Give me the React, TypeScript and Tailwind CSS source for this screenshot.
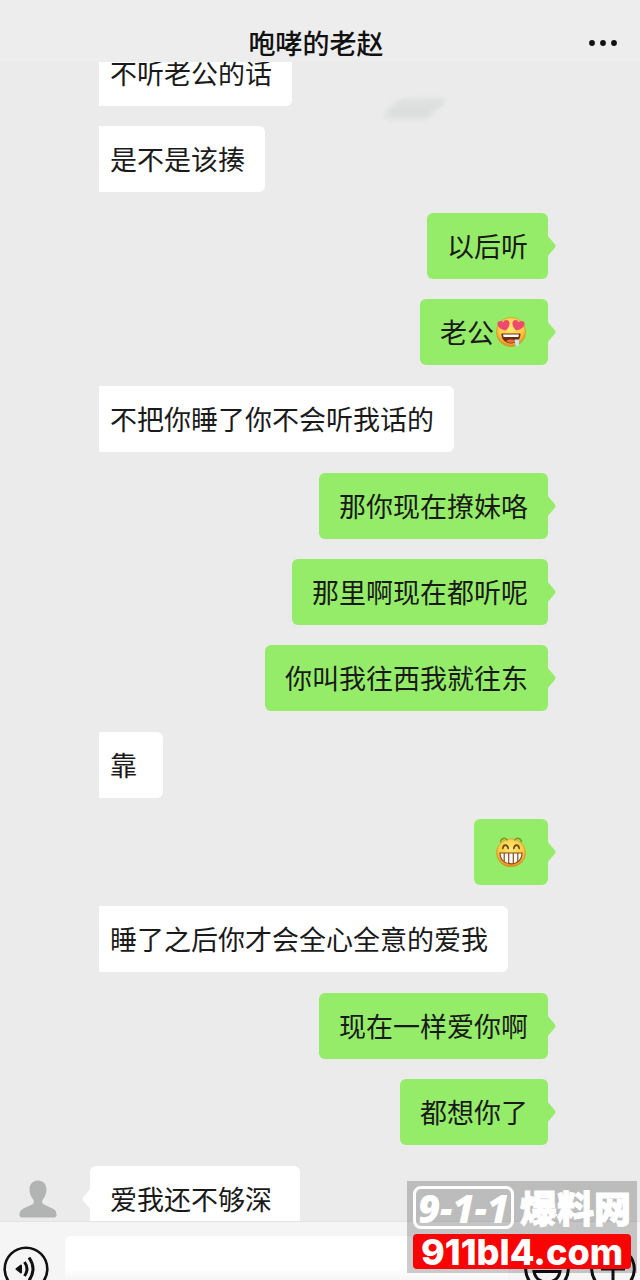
import { type ReactNode } from "react";

type Message = {
  text?: string;
  emoji?: ReactNode;
};

type MessageGroup = {
  from: "me" | "them";
  avatar?: boolean;
  messages: Message[];
};

function cx(...values: Array<string | false | null | undefined>) {
  return values.filter(Boolean).join(" ");
}

function FaceGradient({ id }: { id: string }) {
  return (
    <radialGradient id={id} cx="50%" cy="35%" r="65%">
      <stop offset="0" stopColor="#ffe873" />
      <stop offset="0.65" stopColor="#fcc944" />
      <stop offset="1" stopColor="#e08a22" />
    </radialGradient>
  );
}

function DroolEmoji() {
  return (
    <svg viewBox="0 0 30 30" className="mx-0.5 size-[30px]" role="img" aria-label="色">
      <defs>
        <FaceGradient id="drool-face" />
      </defs>
      <circle cx="15" cy="15" r="14.6" fill="url(#drool-face)" stroke="#d98a1e" strokeWidth="0.6" />
      <path
        d="M9.5 13.6C5 12.4 1.2 10 1.4 6.6C1.6 3.6 5.2 3 7.2 5.2C8.4 2.4 12.400 2.200 13.400 5.200C14.200 8 12 11.600 9.500 13.600Z"
        fill="#ee4a6e"
      />
      <path
        d="M20.5 13.6C25 12.4 28.8 10 28.6 6.6C28.4 3.6 24.8 3 22.8 5.2C21.6 2.4 17.600 2.200 16.600 5.200C15.800 8 18 11.600 20.500 13.600Z"
        fill="#ee4a6e"
      />
      <path d="M5.500 16.500H24.500C24.800 22.500 20.500 26.500 15 26.500C9.500 26.500 5.200 22.500 5.500 16.500Z" fill="#6b2d12" />
      <path d="M7 17.500H23L22.400 20H7.600Z" fill="#fff" />
      <path d="M10 24.200C12 22 17.500 22 20 24.200C17.500 26.300 13 26.300 10 24.200Z" fill="#ef6a3c" />
      <path d="M18.500 22.500H23V27C23 30 19.200 30 19.200 27Z" fill="#bfe6f5" />
    </svg>
  );
}

function GrinEmoji() {
  return (
    <svg viewBox="0 0 30 30" className="mx-0.5 size-[30px]" role="img" aria-label="呲牙">
      <defs>
        <FaceGradient id="grin-face" />
      </defs>
      <ellipse cx="15" cy="15.800" rx="14.500" ry="14" fill="url(#grin-face)" stroke="#d98a1e" strokeWidth="0.6" />
      <g fill="none" stroke="#87951f" strokeWidth="1.600" strokeLinecap="round">
        <path d="M4.500 4.500C5.500 0.800 9.500 0.400 11 3" />
        <path d="M19 3C20.500 0.400 24.500 0.800 25.500 4.500" />
      </g>
      <g fill="none" stroke="#6b4a12" strokeWidth="1.600" strokeLinecap="round">
        <path d="M6.800 11.500C7.300 7 11.500 7 12.300 11.500" />
        <path d="M17.700 11.500C18.500 7 22.700 7 23.200 11.500" />
      </g>
      <path
        d="M4 16H26C26 22.500 21.500 26.800 15 26.800C8.500 26.800 4 22.500 4 16Z"
        fill="#fff"
        stroke="#8a4b14"
        strokeWidth="1.200"
      />
      <path d="M8.200 16V24.500M12.700 16V26.500M17.300 16V26.500M21.800 16V24.500" stroke="#8a4b14" strokeWidth="1.200" />
    </svg>
  );
}

const groups: MessageGroup[] = [
  { from: "them", messages: [{ text: "不听老公的话" }, { text: "是不是该揍" }] },
  { from: "me", messages: [{ text: "以后听" }, { text: "老公", emoji: <DroolEmoji /> }] },
  { from: "them", messages: [{ text: "不把你睡了你不会听我话的" }] },
  {
    from: "me",
    messages: [{ text: "那你现在撩妹咯" }, { text: "那里啊现在都听呢" }, { text: "你叫我往西我就往东" }],
  },
  { from: "them", messages: [{ text: "靠" }] },
  { from: "me", messages: [{ emoji: <GrinEmoji /> }] },
  { from: "them", messages: [{ text: "睡了之后你才会全心全意的爱我" }] },
  { from: "me", messages: [{ text: "现在一样爱你啊" }, { text: "都想你了" }] },
  { from: "them", avatar: true, messages: [{ text: "爱我还不够深" }] },
];

function Tail({ side }: { side: "left" | "right" }) {
  return (
    <svg
      viewBox="0 0 9 22"
      aria-hidden="true"
      className={cx(
        "absolute top-[22px] h-[22px] w-[9px]",
        side === "right" ? "-right-2 text-[#95ec69]" : "-left-2 rotate-180 text-white",
      )}
    >
      <path d="M0 0L8 9.500Q9 11 8 12.500L0 22Z" fill="currentColor" />
    </svg>
  );
}

function Bubble({ message, from, tail }: { message: Message; from: "me" | "them"; tail: boolean }) {
  return (
    <div
      className={cx(
        "relative flex h-[66px] min-w-16 items-center text-[27px] leading-8 text-[#1a1a1a]",
        from === "me" && "rounded-md bg-[#95ec69] px-5",
        from === "them" && "bg-white",
        from === "them" && (tail ? "rounded-md pr-7 pl-5" : "rounded-r-md pr-5 pl-[11px]"),
      )}
    >
      {message.text ? <span>{message.text}</span> : null}
      {message.emoji}
      {tail ? <Tail side={from === "me" ? "right" : "left"} /> : null}
    </div>
  );
}

function Avatar() {
  return (
    <svg viewBox="0 0 38 38" className="mr-[33px] ml-[19px] size-[38px]" role="img" aria-label="头像">
      <path
        d="M19 0.500C24 0.500 27.500 4 27.500 9.500C27.500 14 25.500 17.500 23.500 20C22.800 22 23.200 23.500 25 24.500L34.500 29C37 30.500 37.500 32.500 37.500 35C37.500 36.500 36.800 37.500 35 37.500H3C1.200 37.500 0.500 36.500 0.500 35C0.500 32.500 1 30.500 3.500 29L13 24.500C14.800 23.500 15.200 22 14.500 20C12.500 17.500 10.500 14 10.500 9.500C10.500 4 14 0.500 19 0.500Z"
        fill="#b2b4b3"
      />
    </svg>
  );
}

function Group({ group }: { group: MessageGroup }) {
  return (
    <li
      className={cx(
        "flex flex-col gap-5",
        group.from === "me" && "items-end pr-[92px]",
        group.from === "them" && !group.avatar && "items-start pl-[99px]",
      )}
    >
      {group.messages.map((message, index) => (
        <div key={index} className="flex items-center">
          {group.avatar ? <Avatar /> : null}
          <Bubble message={message} from={group.from} tail={group.from === "me" || Boolean(group.avatar)} />
        </div>
      ))}
    </li>
  );
}

function Watermark() {
  return (
    <div className="pointer-events-none absolute right-[3px] bottom-[7px] w-[230px] bg-black/20 px-1.5 pt-[5px] pb-1 text-white">
      <div className="flex h-12 items-start justify-between">
        <span className="flex h-[43px] w-[101px] items-center justify-center rounded-lg border-3 border-white font-['Open_Sans'] text-[38px] leading-9 font-extrabold italic">
          9-1-1
        </span>
        <span className="text-[37px] leading-[43px] font-black [-webkit-text-stroke:1px_white]">爆料网</span>
      </div>
      <div className="flex h-[35px] items-center justify-center rounded-sm bg-[#f80404] font-[Inter] text-4xl font-extrabold">
        911bl4.com
      </div>
    </div>
  );
}

export default function App() {
  return (
    <div className="relative flex h-screen flex-col overflow-hidden bg-[#ebebeb] font-['Noto_Sans_CJK_SC',sans-serif]">
      <header className="grid h-[62px] shrink-0 grid-cols-[1fr_auto_1fr] items-end bg-[#ededed] pr-[21px] pb-[3px] pl-[13px]">
        <h1 className="col-start-2 text-[27px] leading-8 font-medium text-[#111]">咆哮的老赵</h1>
        <button type="button" aria-label="更多" className="flex h-8 items-center justify-self-end">
          <svg viewBox="0 0 30 8" className="h-2 w-[30px]" fill="#111">
            <circle cx="3" cy="4" r="2.900" />
            <circle cx="14" cy="4" r="2.900" />
            <circle cx="25" cy="4" r="2.900" />
          </svg>
        </button>
      </header>

      <main className="relative min-h-0 flex-1 overflow-hidden bg-[#eaebea]">
        <ul className="-mt-[22px] flex flex-col gap-[21px]">
          {groups.map((group, index) => (
            <Group key={index} group={group} />
          ))}
        </ul>
        <div
          aria-hidden="true"
          className="absolute top-9 right-[196px] h-3 w-12 -skew-x-[30deg] rounded-lg bg-[#dfe1e0] blur-[2px]"
        />
        <div
          aria-hidden="true"
          className="absolute top-[43px] right-[206px] h-3.5 w-12 -skew-x-[20deg] rounded-lg bg-[#dcdedd] blur-[3px]"
        />
      </main>

      <footer className="flex h-[59px] shrink-0 items-start gap-4 border-t border-[#e4e4e4] bg-[#f5f5f5] pr-1 pl-[3px]">
        <button type="button" aria-label="语音" className="mt-6 shrink-0">
          <svg viewBox="0 0 46 46" className="size-[46px]" fill="none" stroke="#111" strokeWidth="2.600">
            <circle cx="23" cy="23" r="21.300" />
            <path d="M13.500 23L18 19.500V26.500Z" fill="#111" strokeWidth="2" strokeLinejoin="round" />
            <path d="M21.500 16Q26.500 23 21.500 30" strokeWidth="3" />
            <path d="M26 11.500Q34 23 26 34.500" strokeWidth="3" />
          </svg>
        </button>
        <input
          type="text"
          aria-label="消息"
          className="mt-3.5 h-[66px] min-w-0 flex-1 rounded-md bg-linear-to-b from-white from-50% to-[#e4e4e4] px-3 text-[27px] outline-none"
        />
        <div className="mt-6 flex shrink-0 gap-5">
          <button type="button" aria-label="表情">
            <svg viewBox="0 0 46 46" className="size-[46px]" fill="none" stroke="#111" strokeWidth="3">
              <circle cx="23" cy="23" r="21.300" />
              <path d="M10 25.500H36C35 32 30 36 23 36C16 36 11 32 10 25.500Z" />
            </svg>
          </button>
          <button type="button" aria-label="更多功能">
            <svg viewBox="0 0 46 46" className="size-[46px]" fill="none" stroke="#111" strokeWidth="3">
              <circle cx="23" cy="23" r="21.300" />
              <path d="M23 11V35M11 23H35" />
            </svg>
          </button>
        </div>
      </footer>

      <Watermark />
    </div>
  );
}
